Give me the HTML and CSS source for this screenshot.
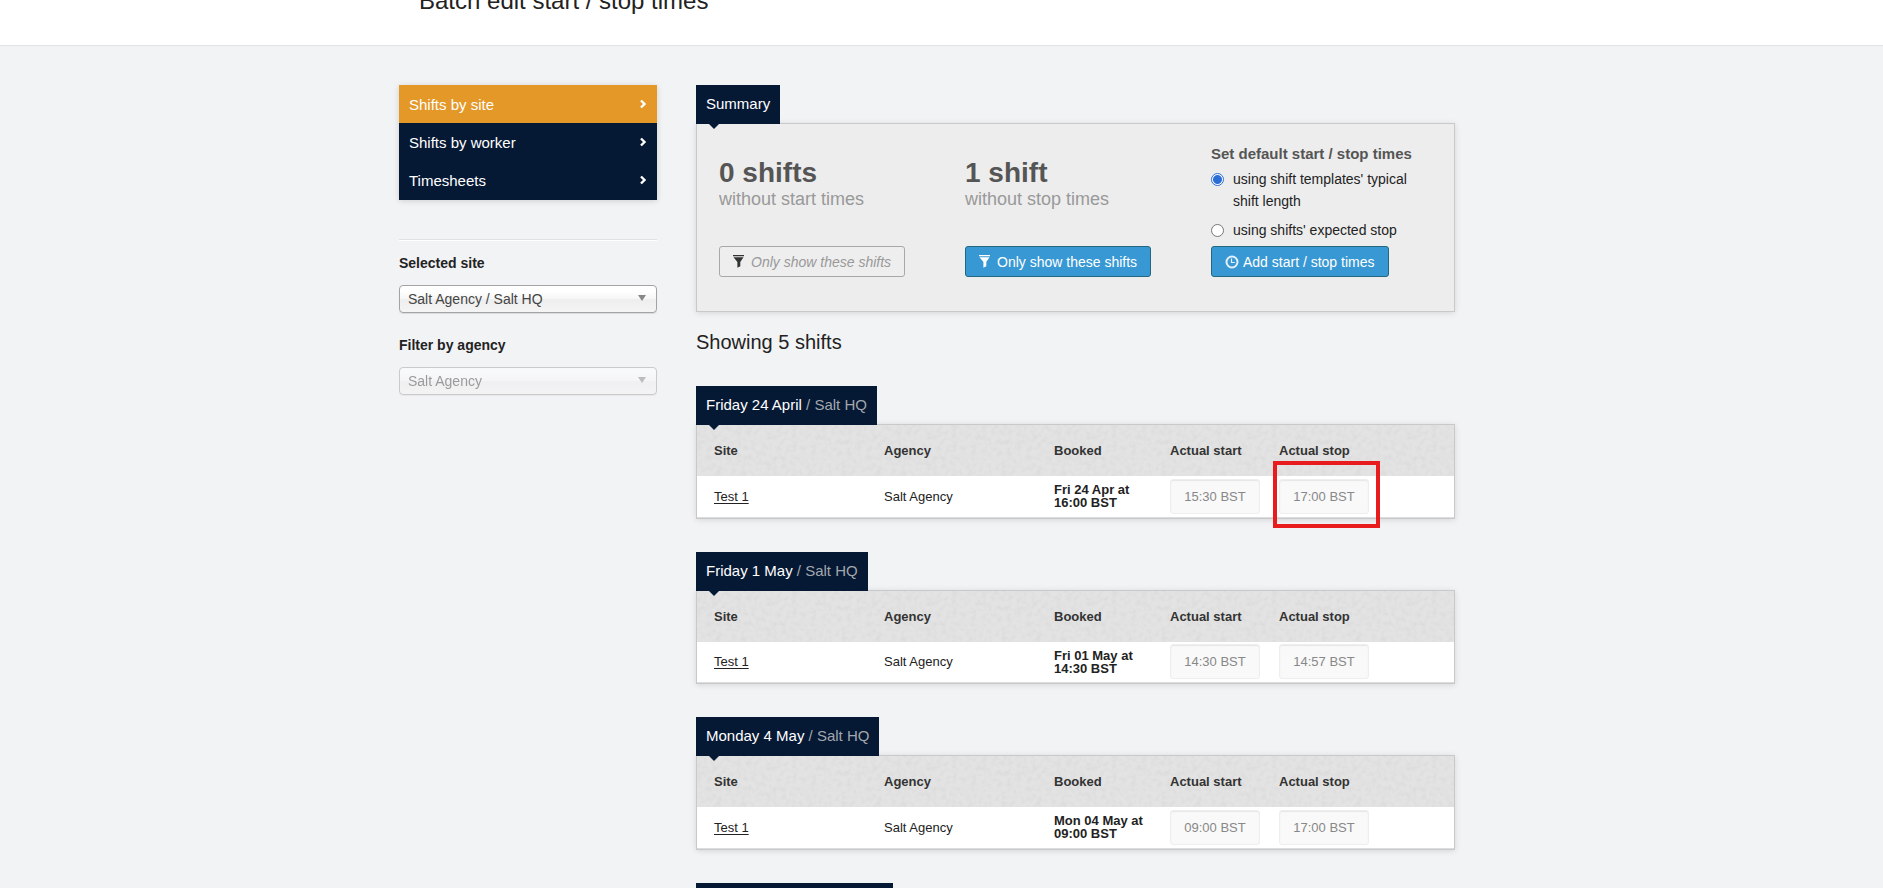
FILE: index.html
```html
<!DOCTYPE html>
<html lang="en">
<head>
<meta charset="utf-8">
<title>Batch edit start / stop times</title>
<link rel="stylesheet" href="styles.css">
</head>
<body>
<svg class="sprite" aria-hidden="true">
  <symbol id="chevron" viewBox="0 0 8 10"><path d="M2 1.5 5.5 5 2 8.5" fill="none" stroke="currentColor" stroke-width="2.4"/></symbol>
  <symbol id="funnel" viewBox="0 0 11 13"><path d="M0 0h11v1.3H0zM.5 2.3h10L7.3 7v4.2L4.4 12.8V7z" fill="currentColor"/></symbol>
  <symbol id="clock" viewBox="0 0 14 14"><circle cx="7" cy="7" r="5.5" fill="none" stroke="currentColor" stroke-width="2"/><path d="M6.5 3.5v4h3.3" fill="none" stroke="currentColor" stroke-width="1.2"/></symbol>
</svg>
<header class="page-header">
  <div class="container"><h1 class="page-title">Batch edit start / stop times</h1></div>
</header>
<div class="container layout">
  <aside class="sidebar">
    <nav class="side-nav">
      <a class="side-link active" href="#">Shifts by site<svg class="chevron"><use href="#chevron"/></svg></a>
      <a class="side-link" href="#">Shifts by worker<svg class="chevron"><use href="#chevron"/></svg></a>
      <a class="side-link" href="#">Timesheets<svg class="chevron"><use href="#chevron"/></svg></a>
    </nav>
    <form class="filters">
      <div class="field">
        <label class="field-label" for="site">Selected site</label>
        <div class="select-wrap"><select class="select" id="site"><option>Salt Agency / Salt HQ</option></select></div>
      </div>
      <div class="field">
        <label class="field-label" for="agency">Filter by agency</label>
        <div class="select-wrap muted"><select class="select" id="agency" disabled><option>Salt Agency</option></select></div>
      </div>
    </form>
  </aside>
  <main class="main">
    <section class="block">
      <h2 class="tab">Summary</h2>
      <div class="panel summary">
        <div class="stat">
          <div class="stat-body">
            <p class="stat-count">0 shifts</p>
            <p class="stat-note">without start times</p>
          </div>
          <button class="button plain" type="button" disabled><svg class="funnel"><use href="#funnel"/></svg>Only show these shifts</button>
        </div>
        <div class="stat">
          <div class="stat-body">
            <p class="stat-count">1 shift</p>
            <p class="stat-note">without stop times</p>
          </div>
          <button class="button" type="button"><svg class="funnel"><use href="#funnel"/></svg>Only show these shifts</button>
        </div>
        <form class="stat defaults">
          <fieldset class="choices">
            <legend class="choices-title">Set default start / stop times</legend>
            <label class="choice"><input class="radio" type="radio" name="default" checked><span>using shift templates' typical shift length</span></label>
            <label class="choice"><input class="radio" type="radio" name="default"><span>using shifts' expected stop</span></label>
          </fieldset>
          <button class="button" type="button"><svg class="clock"><use href="#clock"/></svg>Add start / stop times</button>
        </form>
      </div>
    </section>
    <h2 class="showing">Showing 5 shifts</h2>
    <section class="block">
      <h3 class="tab">Friday 24 April <span class="tab-site">/ Salt HQ</span></h3>
      <div class="panel">
        <table class="shifts">
          <colgroup><col class="c-wide"><col class="c-wide"><col class="c-booked"><col class="c-start"><col></colgroup>
          <thead><tr><th>Site</th><th>Agency</th><th>Booked</th><th>Actual start</th><th>Actual stop</th></tr></thead>
          <tbody><tr>
            <td><a class="site-link" href="#">Test 1</a></td><td>Salt Agency</td><td class="booked">Fri 24 Apr at<br>16:00 BST</td>
            <td><input class="time" aria-label="Actual start" value="15:30 BST" disabled></td>
            <td><div class="marked"><input class="time" aria-label="Actual stop" value="17:00 BST" disabled></div></td>
          </tr></tbody>
        </table>
      </div>
    </section>
    <section class="block">
      <h3 class="tab">Friday 1 May <span class="tab-site">/ Salt HQ</span></h3>
      <div class="panel">
        <table class="shifts">
          <colgroup><col class="c-wide"><col class="c-wide"><col class="c-booked"><col class="c-start"><col></colgroup>
          <thead><tr><th>Site</th><th>Agency</th><th>Booked</th><th>Actual start</th><th>Actual stop</th></tr></thead>
          <tbody><tr>
            <td><a class="site-link" href="#">Test 1</a></td><td>Salt Agency</td><td class="booked">Fri 01 May at<br>14:30 BST</td>
            <td><input class="time" aria-label="Actual start" value="14:30 BST" disabled></td>
            <td><input class="time" aria-label="Actual stop" value="14:57 BST" disabled></td>
          </tr></tbody>
        </table>
      </div>
    </section>
    <section class="block">
      <h3 class="tab">Monday 4 May <span class="tab-site">/ Salt HQ</span></h3>
      <div class="panel">
        <table class="shifts">
          <colgroup><col class="c-wide"><col class="c-wide"><col class="c-booked"><col class="c-start"><col></colgroup>
          <thead><tr><th>Site</th><th>Agency</th><th>Booked</th><th>Actual start</th><th>Actual stop</th></tr></thead>
          <tbody><tr>
            <td><a class="site-link" href="#">Test 1</a></td><td>Salt Agency</td><td class="booked">Mon 04 May at<br>09:00 BST</td>
            <td><input class="time" aria-label="Actual start" value="09:00 BST" disabled></td>
            <td><input class="time" aria-label="Actual stop" value="17:00 BST" disabled></td>
          </tr></tbody>
        </table>
      </div>
    </section>
    <section class="block"><div class="tab tab-next"></div></section>
  </main>
</div>
</body>
</html>
```
FILE: styles.css
```css
*, *::before, *::after { box-sizing: border-box; }

body {
  margin: 0;
  height: 100vh;
  overflow: hidden;
  background: #f2f3f5;
  color: #222;
  font-family: "Liberation Sans", Arial, sans-serif;
  font-size: 14px;
}

h1, h2, h3, p { margin: 0; font-weight: normal; }

.sprite { display: none; }

.container {
  max-width: 1085px;
  margin: 0 auto;
}

/* The heading is scrolled partly out of view */
.page-header {
  display: flex;
  height: 46px;
  overflow: hidden;
  background: #fff;
  border-bottom: 1px solid #e2e2e2;
}
.page-header .container {
  display: flex;
  flex: 1;
  align-items: flex-end;
  padding: 0 20px 30px;
}
.page-title { font-size: 24px; line-height: 28px; }

.layout {
  display: grid;
  grid-template-columns: 258px minmax(0, 1fr);
  gap: 39px;
  padding: 39px 29px 0 0;
}

.side-nav {
  background: #051834;
  box-shadow: 0 1px 6px rgba(0, 0, 0, .15);
  padding-bottom: 1px;
}
.side-link {
  display: flex;
  align-items: center;
  justify-content: space-between;
  height: 38px;
  padding: 0 10px;
  color: #fff;
  font-size: 15px;
  text-decoration: none;
}
.side-link.active { background: #e49828; }
.chevron { width: 8px; height: 10px; }

.filters {
  margin-top: 39px;
  border-top: 1px solid #e0e1e3;
  box-shadow: inset 0 1px #fff;
  padding-top: 14px;
}
.field { margin-bottom: 23px; }
.field-label {
  display: block;
  margin-bottom: 13px;
  font-size: 14px;
  font-weight: bold;
  line-height: 18px;
}
.select-wrap { position: relative; }
.select-wrap::after {
  content: "";
  position: absolute;
  top: 10px;
  right: 11px;
  border: 4px solid transparent;
  border-top: 6px solid #888;
  border-bottom: 0;
  pointer-events: none;
}
.select {
  display: block;
  appearance: none;
  width: 100%;
  height: 28px;
  padding: 0 8px;
  border: 1px solid #a3a3a5;
  border-radius: 4px;
  background: linear-gradient(#fff 20%, #f6f6f6 50%, #eee 52%, #f4f4f4);
  box-shadow: 0 1px 1px rgba(0, 0, 0, .1);
  color: #444;
  font: 14px "Liberation Sans", Arial, sans-serif;
  opacity: 1;
}
.muted { opacity: .5; }

.block { margin-bottom: 33px; }
.tab {
  position: relative;
  z-index: 1;
  width: fit-content;
  height: 39px;
  margin-bottom: -1px;
  padding: 0 10px;
  background: #051834;
  color: #fff;
  font-size: 15px;
  line-height: 38px;
}
.tab::after {
  content: "";
  position: absolute;
  top: 100%;
  left: 13px;
  border: 5px solid transparent;
  border-top-color: #051834;
  border-bottom: 0;
}
.tab-site { color: #a3a7ad; }
.tab-next { width: 197px; }

.panel {
  border: 1px solid #c8c9cb;
  background: #ededed;
  box-shadow: 0 1px 6px rgba(0, 0, 0, .12);
}
.summary {
  display: grid;
  grid-template-columns: 246px 246px minmax(0, 1fr);
  padding: 18px 22px 34px;
}
.stat {
  display: flex;
  flex-direction: column;
  align-items: flex-start;
  justify-content: space-between;
}
.stat-body { padding-top: 15px; }
.stat-count {
  color: #555;
  font-size: 28px;
  font-weight: bold;
  line-height: 32px;
}
.stat-note {
  color: #999;
  font-size: 18px;
  line-height: 20px;
}
.button {
  display: flex;
  align-items: center;
  gap: 4px;
  height: 31px;
  padding: 0 13px;
  border: 1px solid #22687f;
  border-radius: 3px;
  background: #3898d3;
  color: #fff;
  font: 14px "Liberation Sans", Arial, sans-serif;
}
.button.plain {
  border-color: #a8a8a8;
  background: #eee;
  color: #999;
  font-style: italic;
}
.funnel { width: 11px; height: 13px; margin-right: 3px; }
.plain .funnel { color: #333; }
.clock { width: 14px; height: 14px; color: #e4f1f9; }

.choices { margin: 0 0 5px; padding: 0; border: 0; }
.choices-title {
  padding: 3px 0 5px;
  color: #555;
  font-size: 15px;
  font-weight: bold;
  line-height: 18px;
}
.choice {
  display: flex;
  gap: 9px;
  margin-bottom: 7px;
  line-height: 22px;
}
.choice:last-child { margin-bottom: 0; }
.radio {
  appearance: none;
  flex: none;
  width: 13px;
  height: 13px;
  margin: 5px 0 0;
  border: 1px solid #767676;
  border-radius: 50%;
  background: #fff;
}
.radio:checked {
  border-color: #2b6fd6;
  background: radial-gradient(circle, #2b6fd6 4px, #fff 5px);
}

.showing {
  margin-bottom: 32px;
  margin-top: -15px;
  font-size: 20px;
  line-height: 24px;
}

.shifts {
  width: 100%;
  border-collapse: collapse;
  table-layout: fixed;
  border-bottom: 1px solid #ddd;
  background: #fff;
  font-size: 13px;
}
.c-wide { width: 170px; }
.c-booked { width: 116px; }
.c-start { width: 109px; }
.shifts thead {
  background: #e3e3e3 url("data:image/svg+xml,%3Csvg xmlns='http://www.w3.org/2000/svg' width='160' height='51'%3E%3Cfilter id='g' x='0' y='0' width='1' height='1'%3E%3CfeTurbulence type='fractalNoise' baseFrequency='.2' numOctaves='2' stitchTiles='stitch'/%3E%3CfeColorMatrix values='0 0 0 0 .4 0 0 0 0 .4 0 0 0 0 .4 .3 0 0 0 -.12'/%3E%3C/filter%3E%3Crect width='160' height='51' filter='url(%23g)'/%3E%3C/svg%3E");
}
.shifts th {
  height: 51px;
  padding: 0 0 0 17px;
  color: #333;
  text-align: left;
}
.shifts td { height: 41px; padding: 0 0 0 17px; }
.shifts .booked { font-weight: bold; line-height: 13px; }
.site-link { color: #222; text-underline-offset: 2px; }
.time {
  display: block;
  width: 90px;
  height: 35px;
  padding: 0;
  border: 1px solid #eee;
  border-radius: 3px;
  background: #f9f9f9;
  box-shadow: inset 0 1px 1px #e6e6e6;
  color: #888;
  font: 13px "Liberation Sans", Arial, sans-serif;
  text-align: center;
}
.marked { position: relative; }
.marked::after {
  content: "";
  position: absolute;
  top: -18px;
  left: -6px;
  width: 107px;
  height: 67px;
  border: 4px solid #e81c1c;
}
```
